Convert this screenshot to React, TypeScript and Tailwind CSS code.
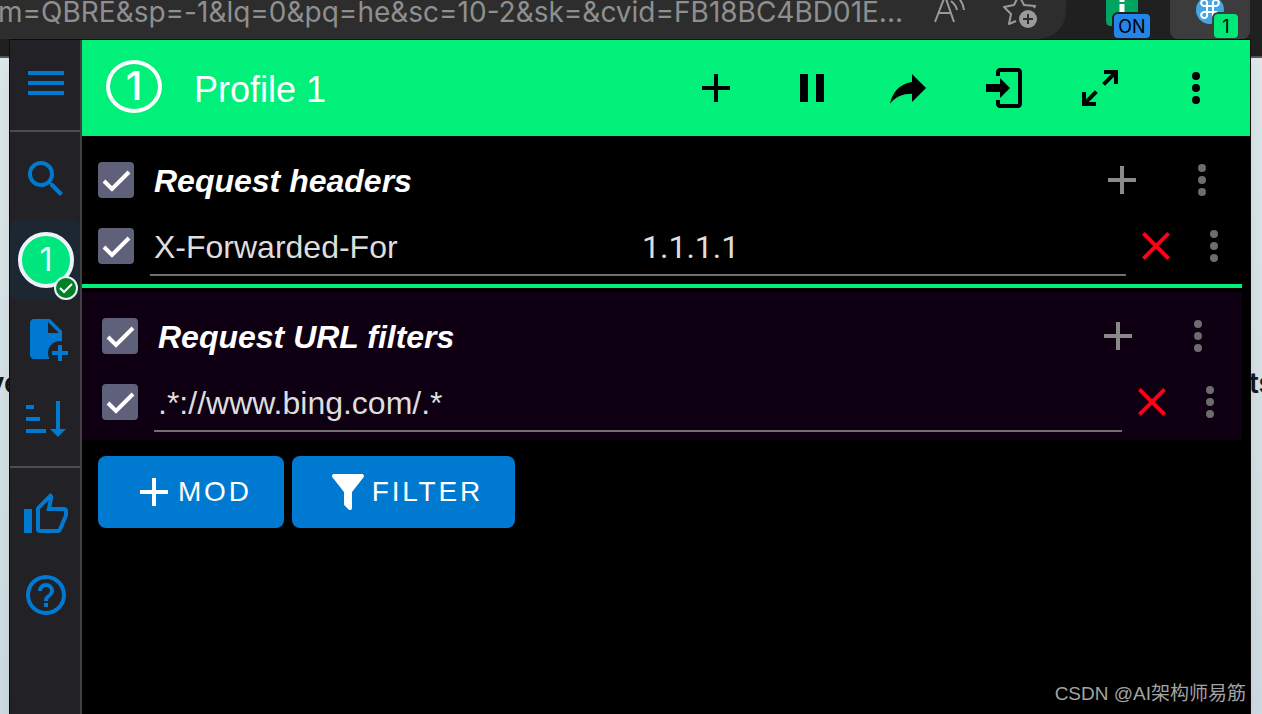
import type { ReactNode } from 'react'

const icons = {
  menu: 'M3,6H21V8H3V6M3,11H21V13H3V11M3,16H21V18H3V16Z',
  search:
    'M9.5,3A6.5,6.5 0 0,1 16,9.5C16,11.11 15.41,12.59 14.44,13.73L14.71,14H15.5L20.5,19L19,20.5L14,15.5V14.71L13.73,14.44C12.59,15.41 11.11,16 9.5,16A6.5,6.5 0 0,1 3,9.5A6.5,6.5 0 0,1 9.5,3M9.5,5C7,5 5,7 5,9.5C5,12 7,14 9.5,14C12,14 14,12 14,9.5C14,7 12,5 9.5,5Z',
  filePlus:
    'M14 2H6C4.89 2 4 2.89 4 4V20C4 21.11 4.89 22 6 22H13.81C13.28 21.09 13 20.05 13 19C13 18.67 13.03 18.33 13.08 18C13.54 15.24 15.86 13.13 18.66 13C19.1 13 19.55 13.05 20 13.14V8L14 2M13 9V3.5L18.5 9H13M23 20H20V23H18V20H15V18H18V15H20V18H23V20Z',
  sort: 'M19 17H22L18 21L14 17H17V3H19V17M2 17H12V19H2V17M6 5V7H2V5H6M2 11H9V13H2V11Z',
  thumb:
    'M5,9V21H1V9H5M9,21A2,2 0 0,1 7,19V9C7,8.45 7.22,7.95 7.59,7.59L14.17,1L15.23,2.06C15.5,2.33 15.67,2.7 15.67,3.11L15.64,3.43L14.69,8H21C22.11,8 23,8.9 23,10V12C23,12.26 22.95,12.5 22.86,12.73L19.84,19.78C19.54,20.5 18.83,21 18,21H9M9,19H18.03L21,12V10H12.21L13.34,4.68L9,9.03V19Z',
  help: 'M11,18H13V16H11V18M12,2A10,10 0 0,0 2,12A10,10 0 0,0 12,22A10,10 0 0,0 22,12A10,10 0 0,0 12,2M12,20C7.59,20 4,16.41 4,12C4,7.59 7.59,4 12,4C16.41,4 20,7.59 20,12C20,16.41 16.41,20 12,20M12,6A4,4 0 0,0 8,10H10A2,2 0 0,1 12,8A2,2 0 0,1 14,10C14,12 11,11.75 11,15H13C13,12.75 16,12.5 16,10A4,4 0 0,0 12,6Z',
  plus: 'M19,13H13V19H11V13H5V11H11V5H13V11H19V13Z',
  pause: 'M14,19H18V5H14M6,19H10V5H6V19Z',
  share: 'M21,12L14,5V9C7,10 4,15 3,20C5.5,16.5 9,14.9 14,14.9V19L21,12Z',
  login:
    'M19 2H10C8.9 2 8 2.9 8 4V6H10V4H19V20H10V18H8V20C8 21.1 8.9 22 10 22H19C20.1 22 21 21.1 21 20V4C21 2.9 20.1 2 19 2M10 7L15 12L10 17V14H3V10H10V7Z',
  expand:
    'M10,21V19H6.41L10.91,14.5L9.5,13.09L5,17.59V14H3V21H10M14.5,10.91L19,6.41V10H21V3H14V5H17.59L13.09,9.5L14.5,10.91Z',
  dots: 'M12,16A2,2 0 0,1 14,18A2,2 0 0,1 12,20A2,2 0 0,1 10,18A2,2 0 0,1 12,16M12,10A2,2 0 0,1 14,12A2,2 0 0,1 12,14A2,2 0 0,1 10,12A2,2 0 0,1 12,10M12,4A2,2 0 0,1 14,6A2,2 0 0,1 12,8A2,2 0 0,1 10,6A2,2 0 0,1 12,4Z',
  close:
    'M19,6.41L17.59,5L12,10.59L6.41,5L5,6.41L10.59,12L5,17.59L6.41,19L12,13.41L17.59,19L19,17.59L13.41,12L19,6.41Z',
  filter:
    'M14,12V19.88C14.04,20.18 13.94,20.5 13.71,20.71C13.32,21.1 12.69,21.1 12.3,20.71L10.29,18.7C10.06,18.47 9.96,18.16 10,17.87V12H9.97L4.21,4.62C3.87,4.19 3.95,3.56 4.38,3.22C4.57,3.08 4.78,3 5,3H19C19.22,3 19.43,3.08 19.62,3.22C20.05,3.56 20.13,4.19 19.79,4.62L14.03,12H14Z',
}

type IconName = keyof typeof icons

function Icon({ name }: { name: IconName }) {
  return (
    <svg viewBox="0 0 24 24" className="size-12 shrink-0" fill="currentColor" aria-hidden="true">
      <path d={icons[name]} />
    </svg>
  )
}

function BrowserBar() {
  return (
    <div className="flex h-[58px] items-start border-b-2 border-[#555555] bg-[#202020]">
      <div className="flex h-[39px] min-w-0 flex-1 items-start rounded-br-[28px] bg-[#2d2d2d] pr-7">
        <span className="-ml-0.5 flex-1 font-['Inter',sans-serif] text-[28px] leading-6 whitespace-nowrap text-[#8f8f8f]">
          m=QBRE&amp;sp=-1&amp;lq=0&amp;pq=he&amp;sc=10-2&amp;sk=&amp;cvid=FB18BC4BD01E...
        </span>
        <button aria-label="Read aloud" className="mr-9 shrink-0">
          <svg width="34" height="26" viewBox="0 0 34 26" fill="none" stroke="#9a9a9a" strokeWidth="2">
            <path d="M3 22L13 -4L22 22M6 13H19M19 1Q24 5 25 10M25 -4Q31 2 32 10" />
          </svg>
        </button>
        <button aria-label="Add to favorites" className="shrink-0">
          <svg width="36" height="30" viewBox="0 0 36 30" fill="none">
            <path
              d="M32 8L33 6L22 5L17 -5L12 5L2 7L9 14L7 24L14 21"
              stroke="#9a9a9a"
              strokeWidth="2"
              strokeLinejoin="round"
            />
            <circle cx="26" cy="19" r="9" fill="#9a9a9a" />
            <path d="M26 14V24M21 19H31" stroke="#2d2d2d" strokeWidth="2" />
          </svg>
        </button>
      </div>
      <button aria-label="Extension on" className="relative ml-10 h-[39px] w-12 shrink-0">
        <svg width="34" height="26" viewBox="0 0 34 26" className="absolute top-0 left-0">
          <path d="M0 0H32V26H5Q0 26 0 21Z" fill="#00a562" />
          <path d="M16 0V2M16 4V13" stroke="#fff" strokeWidth="5" />
        </svg>
        <span className="absolute top-3.5 left-2 w-9 rounded bg-[#2384ea] pt-0.5 text-center font-['Inter',sans-serif] text-[18px] leading-[22px] text-black ring-2 ring-[#202020]">
          ON
        </span>
      </button>
      <button
        aria-label="ModHeader extension"
        className="relative mr-3 ml-4 h-[39px] w-20 shrink-0 rounded-b-lg bg-[#3c3c3c]"
      >
        <svg width="30" height="26" viewBox="0 0 30 26" className="absolute top-0 left-[25px]" fill="none">
          <circle cx="15" cy="10" r="14" fill="#45a5e4" />
          <path
            d="M12 6H18V12H12ZM12 6V4A3 3 0 1 0 9 6H12M18 6H21A3 3 0 1 0 18 4V6M18 12V14A3 3 0 1 0 21 12H18M12 12H9A3 3 0 1 0 12 14V12"
            stroke="#fff"
            strokeWidth="2"
          />
        </svg>
        <span className="absolute top-3.5 right-3 w-6 rounded bg-[#00e878] pt-0.5 text-center font-['Inter',sans-serif] text-[18px] leading-[22px] text-black ring-2 ring-[#3c3c3c]">
          1
        </span>
      </button>
    </div>
  )
}

function SideButton({ name, label }: { name: IconName; label: string }) {
  return (
    <button aria-label={label} className="flex h-20 w-full items-center pb-0.5 pl-3 text-[#007ad1]">
      <Icon name={name} />
    </button>
  )
}

function Sidebar() {
  return (
    <nav className="flex w-[72px] shrink-0 flex-col border-r-2 border-[#414143] bg-[#212126]">
      <button aria-label="Menu" className="flex h-[90px] items-center pb-1 pl-3 text-[#007ad1]">
        <Icon name="menu" />
      </button>
      <div className="border-y-2 border-[#4d4d51] pt-2 pb-1.5">
        <SideButton name="search" label="Search" />
        <button aria-label="Profile 1" className="flex h-20 w-full items-center rounded-lg bg-[#1d2731] pl-2">
          <span className="relative flex size-14 shrink-0 items-center justify-center rounded-full border-4 border-[#edf2fa] bg-[#00e67e] font-['Inter',sans-serif] text-[32px] text-[#e9fbf3]">
            1
            <svg viewBox="0 0 24 24" className="absolute -right-2 -bottom-4 size-6" fill="none">
              <circle cx="12" cy="12" r="11" fill="#008027" stroke="#edf2fa" strokeWidth="2" />
              <path d="M6 12L10 16L18 8" stroke="#fff" strokeWidth="2" />
            </svg>
          </span>
        </button>
        <SideButton name="filePlus" label="New profile" />
        <SideButton name="sort" label="Sort profiles" />
      </div>
      <div className="pt-2">
        <SideButton name="thumb" label="Rate" />
        <SideButton name="help" label="Help" />
      </div>
    </nav>
  )
}

const headerActions: { name: IconName; label: string }[] = [
  { name: 'plus', label: 'Add' },
  { name: 'pause', label: 'Pause' },
  { name: 'share', label: 'Share' },
  { name: 'login', label: 'Sign in' },
  { name: 'expand', label: 'Expand' },
  { name: 'dots', label: 'More' },
]

function Header() {
  return (
    <header className="flex h-24 items-center bg-[#00f079] pr-1.5 pl-6">
      <span className="mb-1 flex h-[53px] w-14 shrink-0 items-center justify-center rounded-[50%] border-4 border-white font-['Inter',sans-serif] text-[40px] leading-10 font-medium text-white">
        1
      </span>
      <h1 className="mt-1 ml-8 flex-1 text-[36px] leading-10 whitespace-nowrap text-white">Profile 1</h1>
      {headerActions.map(action => (
        <button key={action.name} aria-label={action.label} className="flex w-24 justify-center text-black">
          <Icon name={action.name} />
        </button>
      ))}
    </header>
  )
}

function Checkbox({ label }: { label: string }) {
  return (
    <span className="grid size-9 shrink-0">
      <input
        type="checkbox"
        defaultChecked
        aria-label={label}
        className="col-start-1 row-start-1 size-9 appearance-none rounded bg-[#5f617a]"
      />
      <svg viewBox="0 0 36 36" className="pointer-events-none col-start-1 row-start-1" fill="none">
        <path d="M6 19L14 27L31 10" stroke="#fff" strokeWidth="4" />
      </svg>
    </span>
  )
}

function Section({ title, children }: { title: string; children: ReactNode }) {
  return (
    <section className="pt-3 pb-1">
      <div className="flex h-16 items-center pr-5">
        <Checkbox label={title} />
        <h2 className="mt-0.5 ml-5 flex-1 text-[32px] leading-10 font-bold text-white italic">{title}</h2>
        <button aria-label={`Add to ${title}`} className="mr-8 text-[#8a8a8a]">
          <Icon name="plus" />
        </button>
        <button aria-label={`${title} options`} className="text-[#6d6d6d]">
          <Icon name="dots" />
        </button>
      </div>
      <div className="flex h-[68px] items-center pr-2">
        <Checkbox label={`${title} row`} />
        <div className="mr-1.5 ml-4 flex h-[60px] flex-1 border-b-2 border-[#707070] pt-1">{children}</div>
        <button aria-label="Remove" className="mr-2.5 text-[#ff0016]">
          <Icon name="close" />
        </button>
        <button aria-label="Row options" className="text-[#6d6d6d]">
          <Icon name="dots" />
        </button>
      </div>
    </section>
  )
}

function ActionButton({ name, children }: { name: IconName; children: ReactNode }) {
  return (
    <button className="flex h-[72px] items-center rounded-lg bg-[#007ad1] px-8 text-[28px] tracking-widest text-white">
      <Icon name={name} />
      {children}
    </button>
  )
}

export default function App() {
  return (
    <div className="relative h-screen min-h-[640px] overflow-hidden bg-linear-to-b from-[#dfeaeb] to-[#cfdce2] font-['Liberation_Sans',Arial,sans-serif]">
      <BrowserBar />
      <div className="flex justify-between pt-[305px] font-['Inter',sans-serif] text-[28px] leading-10 font-semibold text-[#161616]">
        <span className="-ml-3">ve</span>
        <span className="-mr-3">ts</span>
      </div>

      <div className="absolute top-[39px] right-[11px] bottom-0 left-[9px] flex border border-b-0 border-[#0c0c0c] bg-black shadow-xl">
        <Sidebar />
        <main className="min-w-0 flex-1">
          <Header />
          <div className="pr-1 pl-4">
            <Section title="Request headers">
              <input
                aria-label="Header name"
                defaultValue="X-Forwarded-For"
                className="w-1/2 min-w-0 px-1 text-[32px] text-[#dedede]"
              />
              <input
                aria-label="Header value"
                defaultValue="1.1.1.1"
                className="w-1/2 min-w-0 px-1 font-['Roboto',sans-serif] text-[32px] text-[#dedede]"
              />
            </Section>
          </div>
          <div className="mr-2 mb-1 h-1 bg-[#00f079]" />
          <div className="mr-2 bg-[#0e0012] pl-5">
            <Section title="Request URL filters">
              <input
                aria-label="URL filter"
                defaultValue=".*://www.bing.com/.*"
                className="w-full min-w-0 px-1 text-[32px] text-[#dedede]"
              />
            </Section>
          </div>
          <div className="flex gap-2 p-4">
            <ActionButton name="plus">MOD</ActionButton>
            <ActionButton name="filter">FILTER</ActionButton>
          </div>
        </main>
      </div>

      <p className="absolute right-4 bottom-1 font-['Liberation_Sans','Noto_Sans_CJK_SC',sans-serif] text-[19px] leading-8 text-[#a3a3a3]">
        CSDN @AI架构师易筋
      </p>
    </div>
  )
}
